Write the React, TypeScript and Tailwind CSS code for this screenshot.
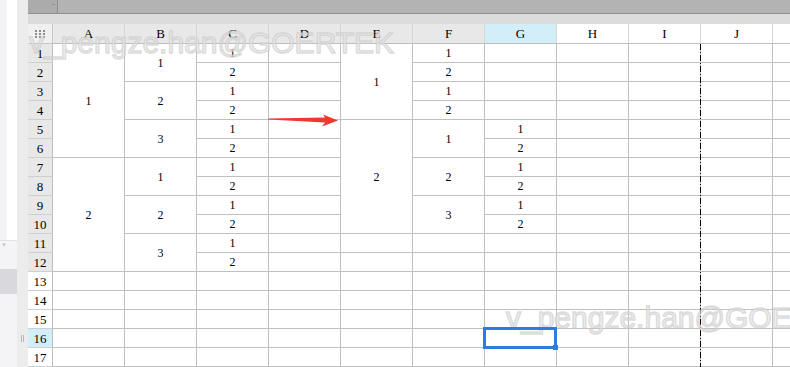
import React from "react";

type Seg = { span: number; text?: string };

const spanClass: Record<number, string> = {
  1: "row-span-1",
  2: "row-span-2",
  4: "row-span-4",
  6: "row-span-6",
};

const empties = (n: number): Seg[] => Array.from({ length: n }, () => ({ span: 1 }));
const alt = (n: number): Seg[] =>
  Array.from({ length: n }, (_, i) => ({ span: 1, text: i % 2 === 0 ? "1" : "2" }));

const columns: { name: string; head: string; segs: Seg[] }[] = [
  { name: "A", head: "bg-[#e8e8e8]", segs: [{ span: 6, text: "1" }, { span: 6, text: "2" }, ...empties(5)] },
  {
    name: "B",
    head: "bg-[#e8e8e8]",
    segs: [
      { span: 2, text: "1" },
      { span: 2, text: "2" },
      { span: 2, text: "3" },
      { span: 2, text: "1" },
      { span: 2, text: "2" },
      { span: 2, text: "3" },
      ...empties(5),
    ],
  },
  { name: "C", head: "bg-[#e8e8e8]", segs: [...alt(12), ...empties(5)] },
  { name: "D", head: "bg-[#e8e8e8]", segs: empties(17) },
  { name: "E", head: "bg-[#e8e8e8]", segs: [{ span: 4, text: "1" }, { span: 6, text: "2" }, ...empties(7)] },
  {
    name: "F",
    head: "bg-[#e8e8e8]",
    segs: [...alt(4), { span: 2, text: "1" }, { span: 2, text: "2" }, { span: 2, text: "3" }, ...empties(7)],
  },
  { name: "G", head: "bg-[#d2eef9]", segs: [...empties(4), ...alt(6), ...empties(7)] },
  { name: "H", head: "bg-white", segs: empties(17) },
  { name: "I", head: "bg-white", segs: empties(17) },
  { name: "J", head: "bg-white", segs: empties(17) },
  { name: "K", head: "bg-white", segs: empties(17) },
];

const font = "font-['SimSun','Liberation_Serif',serif]";

function rowHeadBg(r: number) {
  if (r === 16) return "bg-[#d2eef9]";
  if (r <= 12) return "bg-[#e8e8e8]";
  return "bg-white";
}

export default function App() {
  const rows = Array.from({ length: 17 }, (_, i) => i + 1);
  return (
    <div className="relative w-[790px] h-[367px] overflow-hidden bg-white flex">
      {/* left side panel */}
      <div className="w-[17px] flex flex-col shrink-0">
        <div className="h-[240px] flex">
          <div className="w-[7px] bg-[#f4f4f6]" />
          <div className="flex-1 bg-white" />
        </div>
        <div className="flex-1 bg-[#f4f4f6] border-t border-[#e2e2e4] relative">
          <div className="absolute left-[1px] top-[1px] text-[6px] leading-none text-[#c4c4c4]">▼</div>
          <div className="mt-[28px] h-[25px] bg-[#d9d9dd]" />
        </div>
      </div>
      <div className="w-[11px] bg-[#ececec] shrink-0 flex flex-col items-center">
        <div className="mt-[335px] flex gap-[1px]">
          <div className="w-[1px] h-[7px] bg-[#b8b8b8]" />
          <div className="w-[1px] h-[7px] bg-[#b8b8b8]" />
        </div>
      </div>

      {/* main */}
      <div className="flex-1 flex flex-col min-w-0">
        <div className="h-[14px] bg-[#b3b3b3] border-b border-[#8f8f8f] flex">
          <div className="w-[30px] h-full bg-[#ababab] border-r border-[#8f8f8f] relative">
            <div className="absolute left-[24px] top-[4px] w-[3px] h-[1px] bg-[#8f8f8f]" />
          </div>
        </div>
        <div className="h-[10px] bg-[#dcdcdc]" />
        <div className={`grid grid-flow-col grid-cols-[25px_repeat(11,72px)] grid-rows-[20px_repeat(17,19px)] ${font} text-[13px] text-black leading-none`}>
          {/* corner */}
          <div className="bg-[#f0f0f0] border-r border-b border-[#c8c8c8] flex items-center justify-center">
            <svg width="11" height="8" viewBox="0 0 11 8">
              {[0, 1, 2].map((r) =>
                [0, 1, 2].map((c) => (
                  <rect key={`${r}-${c}`} x={c * 4} y={r * 3} width="2" height="2" fill="#8e8e8e" />
                ))
              )}
            </svg>
          </div>
          {rows.map((r) => (
            <div
              key={r}
              className={`${rowHeadBg(r)} border-r border-r-[#bdbdbd] border-b border-b-[#cfcfcf] flex items-center justify-center`}
            >
              {r}
            </div>
          ))}
          {columns.map((col) => (
            <React.Fragment key={col.name}>
              <div
                className={`${col.head} border-r border-r-[#d6d6d6] border-b border-b-[#bdbdbd] flex items-center justify-center`}
              >
                {col.name}
              </div>
              {col.segs.map((s, i) => (
                <div
                  key={i}
                  className={`${spanClass[s.span]} bg-white border-r border-b border-[#c0c0c0] flex items-center justify-center text-[12px] text-black`}
                >
                  {s.text}
                </div>
              ))}
            </React.Fragment>
          ))}
        </div>
      </div>

      {/* page-break dashed line */}
      <div className="absolute left-[700px] top-[44px] bottom-0 w-[1px] bg-[repeating-linear-gradient(to_bottom,#000_0px,#000_6px,transparent_6px,transparent_8px,#000_8px,#000_9px,transparent_9px,transparent_11px)]" />

      {/* red arrow */}
      <svg className="absolute left-[266px] top-[110px]" width="76" height="20" viewBox="0 0 76 20">
        <polygon points="2,8.4 59,7.6 57,4.5 72,10.6 56,16.6 59,12.6 2,9.4" fill="#ee3a2e" />
      </svg>

      {/* watermarks */}
      <div className="absolute left-[29px] top-[28px] text-[30px] leading-[30px] whitespace-nowrap font-['Liberation_Sans',Arial,sans-serif] text-[rgba(235,235,235,0.6)] [-webkit-text-stroke:1.5px_rgba(200,200,200,0.6)] pointer-events-none">
        v_pengze.han@GOERTEK
      </div>
      <div className="absolute left-[506px] top-[303px] text-[30px] leading-[30px] whitespace-nowrap font-['Liberation_Sans',Arial,sans-serif] text-[rgba(235,235,235,0.6)] [-webkit-text-stroke:1.5px_rgba(200,200,200,0.6)] pointer-events-none">
        v_pengze.han@GOERTEK
      </div>

      {/* selection */}
      <div className="absolute left-[483px] top-[327px] w-[74px] h-[22px] border-[3px] border-[#2b7de3]" />
      <div className="absolute left-[553px] top-[345px] w-[5px] h-[5px] bg-[#2b7de3]" />
    </div>
  );
}
